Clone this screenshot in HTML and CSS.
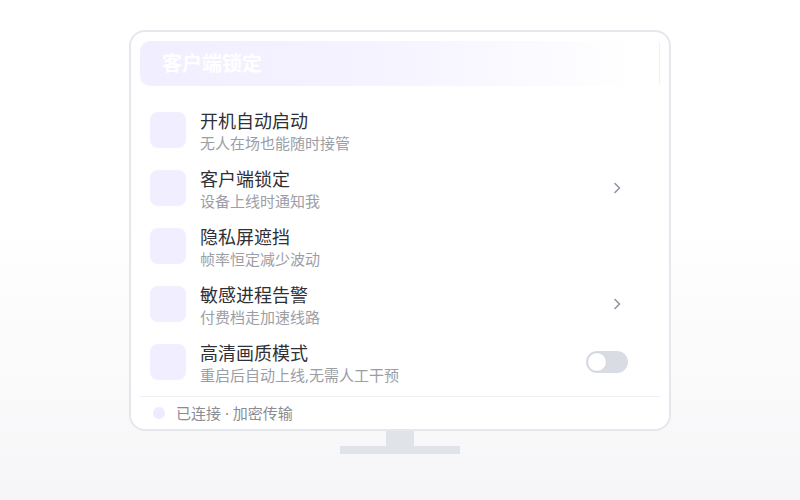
FILE: index.html
```html
<!DOCTYPE html>
<html lang="zh">
<head>
<meta charset="utf-8">
<link rel="stylesheet" href="styles.css">
</head>
<body>
<div class="stage">
  <div class="monitor">
    <div class="header">客户端锁定</div>
    <div class="list">
      <div class="row">
        <div class="icon"></div>
        <div class="text"><div class="title">开机自动启动</div><div class="sub">无人在场也能随时接管</div></div>
      </div>
      <div class="row">
        <div class="icon"></div>
        <div class="text"><div class="title">客户端锁定</div><div class="sub">设备上线时通知我</div></div>
        <svg class="chev" width="14" height="14" viewBox="0 0 14 14"><path d="M5 2.5 L9.5 7 L5 11.5" fill="none" stroke="#8d95a5" stroke-width="1.6" stroke-linecap="round" stroke-linejoin="round"/></svg>
      </div>
      <div class="row">
        <div class="icon"></div>
        <div class="text"><div class="title">隐私屏遮挡</div><div class="sub">帧率恒定减少波动</div></div>
      </div>
      <div class="row">
        <div class="icon"></div>
        <div class="text"><div class="title">敏感进程告警</div><div class="sub">付费档走加速线路</div></div>
        <svg class="chev" width="14" height="14" viewBox="0 0 14 14"><path d="M5 2.5 L9.5 7 L5 11.5" fill="none" stroke="#8d95a5" stroke-width="1.6" stroke-linecap="round" stroke-linejoin="round"/></svg>
      </div>
      <div class="row">
        <div class="icon"></div>
        <div class="text"><div class="title">高清画质模式</div><div class="sub">重启后自动上线,无需人工干预</div></div>
        <div class="toggle"><div class="knob"></div></div>
      </div>
    </div>
    <div class="footer"><span class="dot"></span><span class="status">已连接 · 加密传输</span></div>
  </div>
  <div class="neck"></div>
  <div class="base"></div>
</div>
</body>
</html>
```

FILE: styles.css
```css
* { box-sizing: border-box; }
html, body { margin: 0; padding: 0; }
body {
  width: 800px;
  height: 500px;
  font-family: "Noto Sans", "Noto Sans CJK SC", sans-serif;
  overflow: hidden;
  background: linear-gradient(180deg, #ffffff 0%, #ffffff 45%, #f6f6f8 100%);
}
.stage {
  display: flex;
  flex-direction: column;
  align-items: center;
  padding-top: 30px;
}
.monitor {
  width: 542px;
  height: 401px;
  border: 2px solid #e4e7ec;
  border-radius: 16px;
  padding: 9px 9px 0 9px;
  background: #fff;
  display: flex;
  flex-direction: column;
}
.header {
  height: 45px;
  border-radius: 10px 4px 4px 10px;
  background: linear-gradient(90deg, #f1eeff 0%, #f6f4ff 50%, #ffffff 96%);
  border-right: 1px solid #eef0f4;
  color: #ffffff;
  font-size: 20px;
  font-weight: 700;
  line-height: 45px;
  padding-left: 22px;
}
.list {
  margin-top: 15px;
  display: flex;
  flex-direction: column;
}
.row {
  height: 58px;
  display: flex;
  align-items: center;
  padding: 0 32px 0 10px;
}
.icon {
  width: 36px;
  height: 36px;
  border-radius: 8px;
  background: #f1efff;
  flex: none;
}
.text {
  margin-left: 14px;
  flex: 1;
  display: flex;
  flex-direction: column;
  padding-top: 3px;
}
.title {
  font-size: 18px;
  line-height: 23px;
  color: #2f3036;
}
.sub {
  font-size: 15px;
  line-height: 20px;
  color: #9c9ea6;
}
.chev {
  margin-right: 4px;
  flex: none;
}
.toggle {
  width: 42px;
  height: 22px;
  border-radius: 11px;
  background: #d9dce3;
  padding: 1px;
  flex: none;
}
.knob {
  width: 20px;
  height: 20px;
  border-radius: 50%;
  background: #ffffff;
  border: 1.5px solid #cfd3db;
}
.footer {
  margin-top: 5px;
  border-top: 1px solid #eef0f3;
  height: 32px;
  display: flex;
  align-items: center;
  padding-left: 13px;
}
.dot {
  width: 12px;
  height: 12px;
  border-radius: 50%;
  background: #eeebff;
  margin-right: 11px;
}
.status {
  font-size: 15px;
  color: #8a8c94;
}
.neck {
  width: 28px;
  height: 15px;
  background: #e0e3e8;
}
.base {
  width: 120px;
  height: 8px;
  background: #e0e3e8;
}
```
